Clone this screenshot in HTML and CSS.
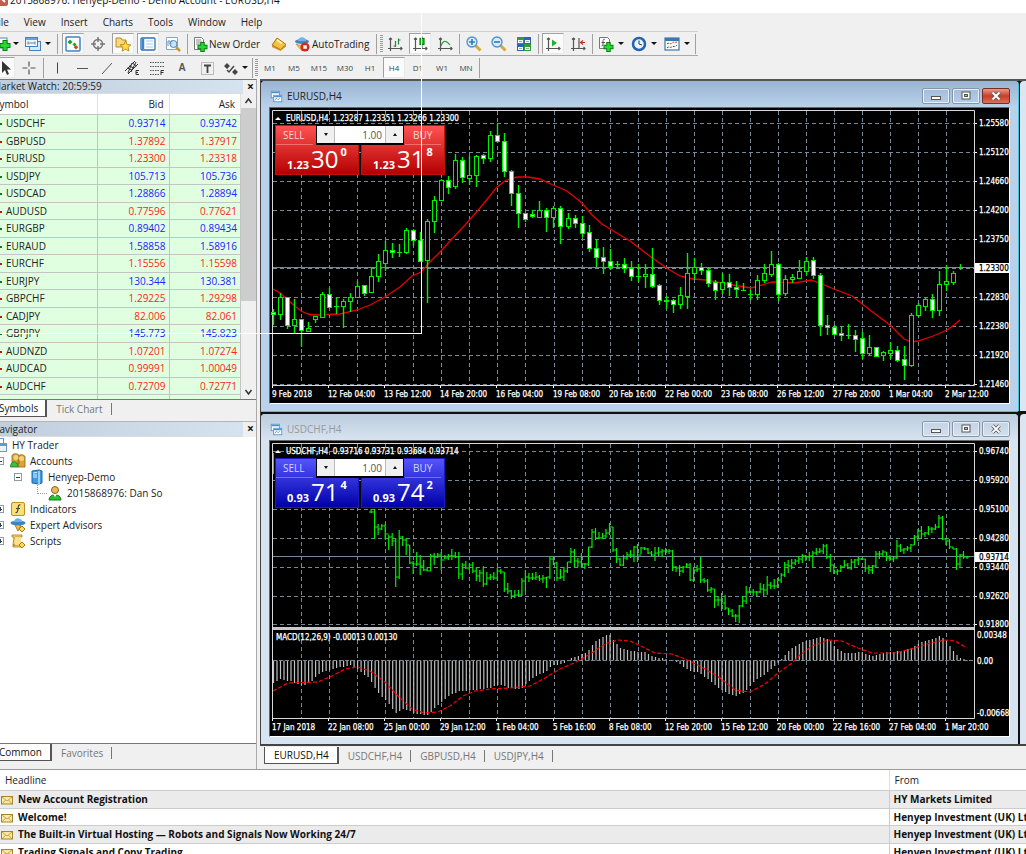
FILE: index.html
```html
<!DOCTYPE html>
<html lang="en">
<head>
<meta charset="utf-8">
<title>Henyep-Demo - Demo Account - EURUSD,H4</title>
<link rel="stylesheet" href="styles.css">
</head>
<body>
<div class="app">
  <header class="titlebar">
    <svg class="ico" viewBox="0 0 16 16"><rect x="1" y="0" width="13" height="14" rx="2" fill="#c75a50"/><path d="M4 3l7 7M4 9l4-4" stroke="#fff" stroke-width="2"/></svg>
    <span>2015868976: Henyep-Demo - Demo Account - EURUSD,H4</span>
  </header>
  <nav class="menubar">
    <button>File</button><button>View</button><button>Insert</button><button>Charts</button><button>Tools</button><button>Window</button><button>Help</button>
  </nav>

  <div class="toolbar">
    <button class="tb drop" aria-label="New chart"><svg class="ico" viewBox="0 0 16 16"><rect x="2" y="2" width="9" height="10" fill="#fff" stroke="#4d88b8"/><path d="M9 4v11M3.500 9.500h11" stroke="#0b7d10" stroke-width="5"/><path d="M9 5v9M4.500 9.500h9" stroke="#28d932" stroke-width="3"/></svg><i class="caret"></i></button>
    <button class="tb drop wide" aria-label="Profiles"><svg class="ico" viewBox="0 0 16 16"><rect x="4.500" y="5.500" width="11" height="9" fill="#d9e8f7" stroke="#4682b8"/><rect x=".5" y="1.500" width="12" height="9" fill="#eef6fd" stroke="#4682b8"/><path d="M1 3h11" stroke="#6ea4d4" stroke-width="2"/><path d="M3 7h7M3 5.500v3M10 5.500v3" stroke="#5b8ab5"/></svg><i class="caret"></i></button>
    <span class="sep roomy"></span>
    <button class="tb on" aria-label="Market Watch"><svg class="ico" viewBox="0 0 16 16"><rect x="1" y="1" width="14" height="14" rx="1" fill="#fff" stroke="#3c85c6" stroke-width="1.500"/><path d="M5 3.500l2.500 2.500L5 8.500 2.500 6z" fill="#1ca32a"/><path d="M9.500 6.500l2 2-2 2-2-2z" fill="#1ca32a"/><path d="M11 9l2.300 2.300L11 13.500 8.700 11.300z" fill="#e03a26"/></svg></button>
    <button class="tb" aria-label="Data Window"><svg class="ico" viewBox="0 0 16 16" fill="none" stroke="#777"><circle cx="8" cy="8" r="4.500" stroke-width="1.500"/><path d="M8 1v5M8 10v5M1 8h5M10 8h5" stroke-width="1.500"/></svg></button>
    <button class="tb on" aria-label="Navigator"><svg class="ico" viewBox="0 0 16 16"><path d="M1 2h5l1 2h4v7H1z" fill="#fbd87a" stroke="#b98a1c"/><path d="M10.500 5l1.700 3.500 3.700.4-2.800 2.500.8 3.700-3.400-1.900-3.400 1.900.8-3.700L5.100 8.900l3.700-.4z" fill="#ffdc45" stroke="#ac7a12" stroke-width=".8"/></svg></button>
    <button class="tb on" aria-label="Terminal"><svg class="ico" viewBox="0 0 16 16"><rect x="1" y="2" width="14" height="12" rx="1" fill="#fff" stroke="#2f74b8" stroke-width="1.300"/><path d="M3 2.500v11" stroke="#3c85c6" stroke-width="2.500"/><path d="M6 5h7M6 8h7M6 11h7" stroke="#a7cbe9"/></svg></button>
    <button class="tb" aria-label="Strategy Tester"><svg class="ico" viewBox="0 0 16 16"><path d="M1.500 1.500h11v12h-11z" fill="#fff" stroke="#8aa6c0"/><path d="M3 10V5h2v3h2V4" fill="none" stroke="#6b8dad"/><path d="M11 11l4 4" stroke="#c9962c" stroke-width="2.500"/><circle cx="8.500" cy="8" r="3.500" fill="#bfdcf4" fill-opacity=".8" stroke="#4d88c0"/></svg></button>
    <span class="sep"></span>
    <button class="tb text order"><svg class="ico" viewBox="0 0 16 16"><path d="M2.500 1.500h7l2 2v10h-9z" fill="#fff" stroke="#777"/><path d="M4 4h5M4 6h6M4 8h5" stroke="#888"/><path d="M10.500 6v10M5.500 11h10" stroke="#0b7d10" stroke-width="4.500"/><path d="M10.500 7v8M6.500 11h8" stroke="#28d932" stroke-width="2.500"/></svg>New Order</button>
    <button class="tb" aria-label="MetaEditor"><svg class="ico" viewBox="0 0 16 16"><path d="M6 2l9 6.500-5.500 5L1 9z" fill="#f3c144" stroke="#a5711a"/><path d="M1 9l8.500 4.500L15 8.500v2L9.500 15 1 11z" fill="#d28d22"/><path d="M6 4l5 3.500" stroke="#fff2b0" stroke-width="2"/></svg></button>
    <button class="tb text auto"><svg class="ico" viewBox="0 0 16 16"><ellipse cx="8" cy="5.500" rx="7" ry="2.500" fill="#3f86c7"/><path d="M4 5c0-5 8-5 8 0z" fill="#74b3e8"/><path d="M2 8l6 7 6-7-6 2z" fill="#f0c24a" stroke="#b78724" stroke-width=".7"/><circle cx="11" cy="11" r="4.500" fill="#d8261c"/><rect x="9.300" y="9.300" width="3.500" height="3.500" fill="#fff"/></svg>AutoTrading</button>
    <span class="sep"></span><span class="grip"></span>
    <button class="tb" aria-label="Bar chart"><svg class="ico" viewBox="0 0 16 16" fill="none" stroke="#555" stroke-width="1.200"><path d="M3.500 2v13M1 12.500h14M2 3.500L3.500 2 5 3.500M13.500 11l1.500 1.500-1.500 1.500"/><path d="M8.500 5v6M6.500 10h2M11.500 2.500v6M11.500 4h2" stroke="#23863a"/></svg></button>
    <button class="tb on" aria-label="Candlesticks"><svg class="ico" viewBox="0 0 16 16" fill="none" stroke="#555" stroke-width="1.200"><path d="M3.500 2v13M1 12.500h14M2 3.500L3.500 2 5 3.500M13.500 11l1.500 1.500-1.500 1.500M10 .5V12"/><rect x="8" y="2.500" width="4" height="6" fill="#1fd02c" stroke="#0b7d10"/></svg></button>
    <button class="tb" aria-label="Line chart"><svg class="ico" viewBox="0 0 16 16" fill="none" stroke="#555" stroke-width="1.200"><path d="M3.500 2v13M1 12.500h14M2 3.500L3.500 2 5 3.500M13.500 11l1.500 1.500-1.500 1.500"/><path d="M4 10c2-6 5-6 9-1" stroke="#23a03a"/></svg></button>
    <span class="sep"></span>
    <button class="tb" aria-label="Zoom in"><svg class="ico" viewBox="0 0 16 16"><path d="M9 9l5.500 5.500" stroke="#d8a93a" stroke-width="3"/><circle cx="6" cy="6" r="5" fill="#d7ecfb" stroke="#4a90cc" stroke-width="1.300"/><path d="M3 6h6M6 3v6" stroke="#3578b5" stroke-width="1.600"/></svg></button>
    <button class="tb" aria-label="Zoom out"><svg class="ico" viewBox="0 0 16 16"><path d="M9 9l5.500 5.500" stroke="#d8a93a" stroke-width="3"/><circle cx="6" cy="6" r="5" fill="#d7ecfb" stroke="#4a90cc" stroke-width="1.300"/><path d="M3 6h6" stroke="#3578b5" stroke-width="1.600"/></svg></button>
    <button class="tb" aria-label="Tile windows"><svg class="ico" viewBox="0 0 16 16"><path d="M1 1h7v7H1zM8 8h7v7H8z" fill="#2f9d3a"/><path d="M8 1h7v7H8zM1 8h7v7H1z" fill="#2d62b8"/><path d="M2 4h5v3H2zM9 4h5v3H9zM2 11h5v3H2zM9 11h5v3H9z" fill="#fff"/><path d="M3 5.500h3M10 5.500h3M3 12.500h3M10 12.500h3" stroke="#8fb98f"/></svg></button>
    <span class="sep"></span>
    <button class="tb on" aria-label="Auto scroll"><svg class="ico" viewBox="0 0 16 16" fill="none" stroke="#555" stroke-width="1.200"><path d="M3.500 2v13M1 12.500h14M2 3.500L3.500 2 5 3.500M13.500 11l1.500 1.500-1.500 1.500"/><path d="M7 3.500l5 3.500-5 3.500z" fill="#1db32a" stroke="none"/></svg></button>
    <button class="tb" aria-label="Chart shift"><svg class="ico" viewBox="0 0 16 16" fill="none" stroke="#555" stroke-width="1.200"><path d="M3.500 2v13M1 12.500h14M2 3.500L3.500 2 5 3.500M13.500 11l1.500 1.500-1.500 1.500M9 2v10"/><path d="M15 6.500h-4M13 4.500l-2.500 2 2.500 2" stroke="#c0341c"/></svg></button>
    <span class="sep"></span>
    <button class="tb drop wide" aria-label="Indicators"><svg class="ico" viewBox="0 0 16 16"><path d="M1.500 1.500h8l2 2v9h-10z" fill="#fff" stroke="#777"/><path d="M7 3.500c-2-1-2 1-2 3s0 4-1.500 3.500M3.500 6.500h3.500" fill="none" stroke="#555"/><path d="M10.500 6v10M5.500 11h10" stroke="#0b7d10" stroke-width="4.500"/><path d="M10.500 7v8M6.500 11h8" stroke="#28d932" stroke-width="2.500"/></svg><i class="caret"></i></button>
    <button class="tb drop wide" aria-label="Periods"><svg class="ico" viewBox="0 0 16 16"><circle cx="8" cy="8" r="6" fill="#eaf4fc" stroke="#2463ad" stroke-width="2.500"/><path d="M8 4.500V8l3 1" fill="none" stroke="#333"/></svg><i class="caret"></i></button>
    <button class="tb drop wide" aria-label="Templates"><svg class="ico" viewBox="0 0 16 16"><rect x="1" y="2" width="14" height="12" fill="#fff" stroke="#3d77b0" stroke-width="1.200"/><path d="M1 3.500h14" stroke="#3d77b0" stroke-width="3"/><path d="M3 8c2-2 3 1 5-1s3 0 5-1" fill="none" stroke="#b2391f" stroke-dasharray="2 1"/><path d="M3 12c2-2 3 0 5-1s3 0 5-2" fill="none" stroke="#444" stroke-dasharray="2 1"/></svg><i class="caret"></i></button>
    <span class="sep"></span>
  </div>

  <div class="toolbar second">
    <button class="tb on cursor" aria-label="Cursor"><svg class="ico" viewBox="0 0 16 16"><path d="M5 1v12l3-3 2 5 2-1-2-4.500h4z" fill="#333"/></svg></button>
    <button class="tb" aria-label="Crosshair"><svg class="ico" viewBox="0 0 16 16"><path d="M8 1.500v5M8 9.500v5M1.500 8h5M9.500 8h5" stroke="#555" stroke-width="1.200"/></svg></button>
    <span class="sep"></span>
    <button class="tb" aria-label="Vertical line"><svg class="ico" viewBox="0 0 16 16"><path d="M8.500 2.500v11" stroke="#444"/></svg></button>
    <button class="tb" aria-label="Horizontal line"><svg class="ico" viewBox="0 0 16 16"><path d="M3 8.500h11" stroke="#555"/></svg></button>
    <button class="tb" aria-label="Trendline"><svg class="ico" viewBox="0 0 16 16"><path d="M3 14L13 3" stroke="#555"/></svg></button>
    <button class="tb" aria-label="Channel"><svg class="ico" viewBox="0 0 16 16" fill="none" stroke="#333"><path d="M1 11L11 1M4 14L14 4M3 8l5 2M5 6l5 2M8 3l5 3M4 13L8 3M7 12l5-10"/><path d="M15 10.500h-3v4h3M12 12.500h2"/></svg></button>
    <button class="tb" aria-label="Fibonacci"><svg class="ico" viewBox="0 0 16 16" fill="none" stroke="#555"><path d="M1 2.500h14M1 6.500h14M1 10.500h10M1 14.500h9" stroke-dasharray="1.500 1"/><path d="M15 10.500h-3v4.500M12 12.500h2.500" stroke="#333"/></svg></button>
    <button class="tb glyph">A</button>
    <button class="tb" aria-label="Text label"><svg class="ico" viewBox="0 0 16 16" fill="none" stroke="#444"><rect x="2.500" y="2.500" width="12" height="12" stroke="#888" stroke-dasharray="1 1"/><path d="M5 5.500h7M8.500 5v8" stroke-width="1.800"/></svg></button>
    <button class="tb drop wide" aria-label="Arrows"><svg class="ico" viewBox="0 0 16 16"><path d="M4 3l3 3-3 3-3-3zM12 9l3 3-3 3-3-3z" fill="#444"/><path d="M4 10l2 2 5-6" fill="none" stroke="#444" stroke-width="1.500"/></svg><i class="caret"></i></button>
    <span class="sep"></span><span class="grip"></span>
    <button class="tb tf">M1</button><button class="tb tf">M5</button><button class="tb tf long">M15</button><button class="tb tf long">M30</button><button class="tb tf">H1</button><button class="tb tf on">H4</button><button class="tb tf">D1</button><button class="tb tf">W1</button><button class="tb tf">MN</button>
    <span class="sep"></span>
  </div>

  <main class="main">
    <aside class="side">
      <section class="panel watch">
        <div class="panel-head"><h2>Market Watch: 20:59:59</h2><button class="x" aria-label="Close">×</button></div>
        <div class="watch-body">
          <div class="watch-scroll">
            <table class="quotes">
              <thead><tr><th>Symbol</th><th>Bid</th><th>Ask</th></tr></thead>
              <tbody>
                <tr class="up"><td>USDCHF</td><td>0.93714</td><td>0.93742</td></tr>
                <tr class="down"><td>GBPUSD</td><td>1.37892</td><td>1.37917</td></tr>
                <tr class="down"><td>EURUSD</td><td>1.23300</td><td>1.23318</td></tr>
                <tr class="up"><td>USDJPY</td><td>105.713</td><td>105.736</td></tr>
                <tr class="up"><td>USDCAD</td><td>1.28866</td><td>1.28894</td></tr>
                <tr class="down"><td>AUDUSD</td><td>0.77596</td><td>0.77621</td></tr>
                <tr class="up"><td>EURGBP</td><td>0.89402</td><td>0.89434</td></tr>
                <tr class="up"><td>EURAUD</td><td>1.58858</td><td>1.58916</td></tr>
                <tr class="down"><td>EURCHF</td><td>1.15556</td><td>1.15598</td></tr>
                <tr class="up"><td>EURJPY</td><td>130.344</td><td>130.381</td></tr>
                <tr class="down"><td>GBPCHF</td><td>1.29225</td><td>1.29298</td></tr>
                <tr class="down"><td>CADJPY</td><td>82.006</td><td>82.061</td></tr>
                <tr class="up"><td>GBPJPY</td><td>145.773</td><td>145.823</td></tr>
                <tr class="down"><td>AUDNZD</td><td>1.07201</td><td>1.07274</td></tr>
                <tr class="down"><td>AUDCAD</td><td>0.99991</td><td>1.00049</td></tr>
                <tr class="down"><td>AUDCHF</td><td>0.72709</td><td>0.72771</td></tr>
                <tr class="blank"><td></td><td></td><td></td></tr>
              </tbody>
            </table>
          </div>
          <div class="scrollbar">
            <svg viewBox="0 0 14 14"><path d="M4 9l3-4 3 4" fill="none" stroke="#333" stroke-width="1.500"/></svg>
            <div class="thumb"></div>
            <svg viewBox="0 0 14 14"><path d="M4 5l3 4 3-4" fill="none" stroke="#333" stroke-width="1.500"/></svg>
          </div>
        </div>
        <div class="tabs"><button class="tab active">Symbols</button><button class="tab">Tick Chart</button></div>
      </section>
      <section class="panel nav">
        <div class="panel-head"><h2>Navigator</h2><button class="x" aria-label="Close">×</button></div>
        <ul class="tree">
          <li class="l0"><svg class="ico" viewBox="0 0 16 16"><rect x="1.500" y="1.500" width="10" height="8" fill="#fff" stroke="#5e9bd2"/><rect x="3.500" y="6.500" width="11" height="8" fill="#eaf3fb" stroke="#5e9bd2"/><path d="M4 8h10" stroke="#5e9bd2" stroke-width="2"/></svg>HY Trader</li>
          <li class="l1"><i class="box minus"></i><svg class="ico" viewBox="0 0 16 16"><path d="M2 3c0-3 7-3 7 0v8H2zM8 4c0-3 7-3 7 0v10H8z" fill="#dba436" stroke="#8f6415" stroke-width=".8"/><circle cx="6" cy="4.500" r="2.500" fill="#f4d27c"/><circle cx="11.500" cy="5.500" r="2.500" fill="#f4d27c"/><path d="M.5 14c0-7 7.500-7 7.500 0z" fill="#3ac040" stroke="#147a1c" stroke-width=".8"/></svg>Accounts</li>
          <li class="l2"><i class="box minus"></i><svg class="ico" viewBox="0 0 16 16"><path d="M4 2l7-1 3 1v12l-3 1-7-1z" fill="#3b9ae6" stroke="#1769b0"/><path d="M5 4l4-.5M5 6h4M5 8h4" stroke="#e4f3ff" stroke-width="1.200"/><path d="M11 2v13" stroke="#bfe0fa" stroke-width="1.500"/></svg>Henyep-Demo</li>
          <li class="l3"><svg class="ico" viewBox="0 0 16 16"><path d="M2 15c0-7 12-7 12 0z" fill="#2fbe36" stroke="#147a1c"/><path d="M6 9l2 3 2-3z" fill="#fff"/><circle cx="8" cy="5" r="3.500" fill="#e9b75c" stroke="#8f6415"/></svg>2015868976: Dan So</li>
          <li class="l1"><i class="box"></i><svg class="ico" viewBox="0 0 16 16"><rect x="1.500" y="1.500" width="13" height="13" rx="1.500" fill="#fbdf79" stroke="#c08d1e"/><path d="M10.500 4C8 3 8.500 6 8 8s-.5 4-2.500 3.500M6 7.500h4" fill="none" stroke="#444" stroke-width="1.200"/></svg>Indicators</li>
          <li class="l1"><i class="box"></i><svg class="ico" viewBox="0 0 16 16"><path d="M4 6l4 8 4-8z" fill="#eec251" stroke="#a9781b"/><ellipse cx="8" cy="6" rx="7.500" ry="2.500" fill="#3c83c6"/><path d="M4 5c0-5 8-5 8 0z" fill="#6cb0e8"/><path d="M12 9l3 3-3 3-3-3z" fill="#ffd95a" stroke="#a9781b"/></svg>Expert Advisors</li>
          <li class="l1"><i class="box"></i><svg class="ico" viewBox="0 0 16 16"><path d="M2 2h10v2H5l1 8H3L4 4H2zM3 12h8v2H3z" fill="#f7d671" stroke="#a9781b" stroke-width=".8"/><path d="M5 4h6v8H5z" fill="#fde08c"/><path d="M12 9l3 3-3 3-3-3z" fill="#ffd95a" stroke="#a9781b"/></svg>Scripts</li>
        </ul>
        <div class="tabs"><button class="tab active">Common</button><button class="tab">Favorites</button></div>
      </section>
    </aside>

    <section class="work">
      <div class="mdi">
        <article class="win active">
          <header class="win-head">
            <svg class="ico" viewBox="0 0 16 16"><rect x="1.500" y="1.500" width="10" height="8" fill="#fff" stroke="#4b8fd0"/><rect x="4.500" y="6.500" width="10" height="8" fill="#fff" stroke="#4b8fd0"/><path d="M5 8h9M2 3h9" stroke="#4b8fd0" stroke-width="2"/><path d="M6 13l2-3 2 2 2-2" fill="none" stroke="#4b8fd0"/></svg>
            <h2>EURUSD,H4</h2>
            <button class="wb" aria-label="Minimize"><svg viewBox="0 0 12 10"><rect x="1.500" y="5.500" width="9" height="3" fill="#fff" stroke="#555"/></svg></button>
            <button class="wb" aria-label="Maximize"><svg viewBox="0 0 12 10"><rect x="2" y="1" width="8" height="7" fill="#fff" stroke="#555"/><rect x="4.500" y="3.500" width="3" height="2" fill="#9bb8da" stroke="#555"/></svg></button>
            <button class="wb close" aria-label="Close"><svg viewBox="0 0 12 10"><path d="M2.500 1.500l7 7M9.500 1.500l-7 7" stroke="#555" stroke-width="3.500"/><path d="M2.500 1.500l7 7M9.500 1.500l-7 7" stroke="#fff" stroke-width="2"/></svg></button>
          </header>
          <div class="client" id="eurusd">
            <div class="trade red">
              <button class="side-btn"><span class="lab">SELL</span><span class="px"><b>1.23</b><em>30</em><sup>0</sup></span></button>
              <button class="side-btn buy"><span class="lab">BUY</span><span class="px"><b>1.23</b><em>31</em><sup>8</sup></span></button>
              <div class="vol"><button aria-label="Less"><i class="caret"></i></button><input aria-label="Volume" value="1.00"><button aria-label="More"><i class="caret flip"></i></button></div>
            </div>
          </div>
        </article>
        <div class="win sliver active"></div>
        <article class="win">
          <header class="win-head">
            <svg class="ico" viewBox="0 0 16 16"><rect x="1.500" y="1.500" width="10" height="8" fill="#fff" stroke="#4b8fd0"/><rect x="4.500" y="6.500" width="10" height="8" fill="#fff" stroke="#4b8fd0"/><path d="M5 8h9M2 3h9" stroke="#4b8fd0" stroke-width="2"/><path d="M6 13l2-3 2 2 2-2" fill="none" stroke="#4b8fd0"/></svg>
            <h2>USDCHF,H4</h2>
            <button class="wb" aria-label="Minimize"><svg viewBox="0 0 12 10"><rect x="1.500" y="5.500" width="9" height="3" fill="#fff" stroke="#555"/></svg></button>
            <button class="wb" aria-label="Maximize"><svg viewBox="0 0 12 10"><rect x="2" y="1" width="8" height="7" fill="#fff" stroke="#555"/><rect x="4.500" y="3.500" width="3" height="2" fill="#9bb8da" stroke="#555"/></svg></button>
            <button class="wb" aria-label="Close"><svg viewBox="0 0 12 10"><path d="M2.500 1.500l7 7M9.500 1.500l-7 7" stroke="#555" stroke-width="3.500"/><path d="M2.500 1.500l7 7M9.500 1.500l-7 7" stroke="#fff" stroke-width="1.800"/></svg></button>
          </header>
          <div class="client" id="usdchf">
            <div class="trade blue">
              <button class="side-btn"><span class="lab">SELL</span><span class="px"><b>0.93</b><em>71</em><sup>4</sup></span></button>
              <button class="side-btn buy"><span class="lab">BUY</span><span class="px"><b>0.93</b><em>74</em><sup>2</sup></span></button>
              <div class="vol"><button aria-label="Less"><i class="caret"></i></button><input aria-label="Volume" value="1.00"><button aria-label="More"><i class="caret flip"></i></button></div>
            </div>
          </div>
        </article>
        <div class="win sliver"></div>
      </div>
      <div class="tabs charts-tabs"><button class="tab active">EURUSD,H4</button><button class="tab">USDCHF,H4</button><button class="tab">GBPUSD,H4</button><button class="tab">USDJPY,H4</button></div>
    </section>
  </main>

  <section class="terminal">
    <table class="mail">
      <thead><tr><th>Headline</th><th class="from">From</th></tr></thead>
      <tbody>
        <tr><td><svg class="env" viewBox="0 0 12 10"><rect x=".5" y="1.500" width="11" height="7.500" fill="#fbe9a6" stroke="#a5832c"/><path d="M1 2l5 4 5-4M1 9l3.500-4M11 9L7.500 5" fill="none" stroke="#b8943c" stroke-width=".8"/></svg>New Account Registration</td><td>HY Markets Limited</td></tr>
        <tr><td><svg class="env" viewBox="0 0 12 10"><rect x=".5" y="1.500" width="11" height="7.500" fill="#fbe9a6" stroke="#a5832c"/><path d="M1 2l5 4 5-4M1 9l3.500-4M11 9L7.500 5" fill="none" stroke="#b8943c" stroke-width=".8"/></svg>Welcome!</td><td>Henyep Investment (UK) Ltd</td></tr>
        <tr><td><svg class="env" viewBox="0 0 12 10"><rect x=".5" y="1.500" width="11" height="7.500" fill="#fbe9a6" stroke="#a5832c"/><path d="M1 2l5 4 5-4M1 9l3.500-4M11 9L7.500 5" fill="none" stroke="#b8943c" stroke-width=".8"/></svg>The Built-in Virtual Hosting — Robots and Signals Now Working 24/7</td><td>Henyep Investment (UK) Ltd</td></tr>
        <tr><td><svg class="env" viewBox="0 0 12 10"><rect x=".5" y="1.500" width="11" height="7.500" fill="#fbe9a6" stroke="#a5832c"/><path d="M1 2l5 4 5-4M1 9l3.500-4M11 9L7.500 5" fill="none" stroke="#b8943c" stroke-width=".8"/></svg>Trading Signals and Copy Trading</td><td>Henyep Investment (UK) Ltd</td></tr>
      </tbody>
    </table>
  </section>
</div>
<div class="marquee"></div>
<script src="charts.js"></script>
</body>
</html>
```
FILE: styles.css
```css
* { box-sizing: border-box; }
body { margin: 0; height: 100vh; overflow: hidden; background: #f0f0f0; color: #222; font: 10px/14px "Open Sans", "Noto Sans", sans-serif; }
button, input { font: inherit; color: inherit; border: 0; padding: 0; background: none; margin: 0; }
h2 { font: inherit; margin: 0; }
.ico { width: 16px; height: 16px; flex: none; display: block; }

/* the shell hangs 8px past the left screen edge */
.app { height: 100vh; margin-left: -8px; display: flex; flex-direction: column; }

.titlebar { height: 13px; flex: none; background: #fff; padding: 0 0 5px 2px; display: flex; align-items: flex-end; overflow: hidden; color: #111; line-height: 16px; }
.menubar { height: 18px; flex: none; padding: 0 0 1px 1px; display: flex; align-items: center; gap: 1px; }
.menubar button { padding: 0 7px; }
.menubar button:first-child { padding-left: 0; }

.toolbar { height: 25px; flex: none; padding-left: 3px; display: flex; align-items: center; gap: 3px; border-top: 1px solid #cfcfcf; border-bottom: 1px solid #a8a8a8; width: 706px; }
.toolbar.second { height: 23px; border: 0; width: auto; }
.tb { width: 22px; height: 21px; display: flex; align-items: center; justify-content: center; border: 1px solid transparent; flex: none; white-space: nowrap; }
.tb.on { background: #fafafa; border-color: #a0a0a0 #e8e8e8 #e8e8e8 #a0a0a0; }
.tb.drop { width: 25px; gap: 1px; }
.tb.drop.wide { width: 30px; gap: 4px; }
.second .tb.drop.wide { width: 28px; gap: 3px; }
.tb.text { justify-content: flex-start; gap: 1px; }
.tb.order { width: 74px; }
.tb.auto { width: 80px; gap: 2px; }
.tb.cursor { width: 20px; }
.tb.glyph { font: bold 10px/14px "Liberation Sans", sans-serif; color: #555; }
.tb.tf { font-size: 8px; color: #444; margin-right: -1px; }
.tb.tf.long { width: 24px; }
.sep { width: 1px; height: 20px; background: #a0a0a0; flex: none; }
.sep.roomy { margin: 0 1px; }
.second .sep { margin-right: -1px; }
.grip { width: 3px; height: 18px; margin-right: -2px; flex: none; background: repeating-linear-gradient(#9a9a9a 0 1px, #f0f0f0 1px 2px); }
.caret { width: 0; height: 0; border: 3px solid transparent; border-top-color: #111; border-bottom: 0; flex: none; }
.caret.flip { border-top: 0; border-bottom: 3px solid #111; }

.main { flex: 1; min-height: 0; display: grid; grid-template-columns: 265px minmax(0, 1fr); gap: 3px; }
.side { display: flex; flex-direction: column; min-height: 0; border-top: 1px solid #777; border-right: 1px solid #aaa; }
.panel { display: flex; flex-direction: column; }
.watch { height: 342px; flex: none; border-bottom: 1px solid #b5b5b5; }
.nav { flex: 1; min-height: 0; }
.panel-head { height: 14px; flex: none; margin-right: 13px; background: linear-gradient(90deg, #bfcddc, #d5e3f1); display: flex; align-items: center; border-bottom: 1px solid #ddd; }
.nav .panel-head { height: 15px; }
.panel-head h2 { flex: 1; line-height: 13px; }
.x { width: 15px; margin-right: -15px; line-height: 12px; font-size: 12px; font-weight: bold; color: #111; }
.watch-body { display: flex; height: 306px; overflow: hidden; border-bottom: 1px solid #777; }
.watch-scroll { flex: 1; }
.quotes { width: 100%; border-collapse: collapse; table-layout: fixed; }
.quotes th { height: 20px; font-weight: normal; background: #fff; padding: 0 5px 0 0; text-align: right; border-right: 1px solid #e0e0e0; border-bottom: 1px solid #c5c5c5; }
.quotes th:first-child { width: 105px; text-align: left; padding-left: 2px; }
.quotes th:nth-child(2) { width: 72px; }
.quotes td { height: 18px; padding: 0 3px 0 0; text-align: right; background: #e0ffe0; border-right: 1px solid #c4c4c4; border-bottom: 1px solid #c4c4c4; line-height: 14px; }
.quotes tr:nth-child(even) td { height: 17px; }
.quotes td:first-child { text-align: left; padding-left: 14px; background: linear-gradient(var(--tick), var(--tick)) 7px 8px / 3px 2px no-repeat #e0ffe0; }
.up { --tick: #0a7a1a; }
.down { --tick: #b01a10; }
.blank { --tick: transparent; }
.up td:not(:first-child) { color: #2222ff; }
.down td:not(:first-child) { color: #ff2414; }
.scrollbar { width: 15px; background: #f0f0f0; display: flex; flex-direction: column; }
.scrollbar svg { height: 14px; flex: none; }
.thumb { height: 193px; background: #cdcdcd; margin-bottom: auto; }

.tabs { display: flex; height: 17px; flex: none; color: #777; }
.tab { padding: 0 9px; height: 17px; position: relative; }
.tab + .tab::after { content: ""; position: absolute; right: 0; top: 3px; height: 12px; border-right: 1px solid #777; }
.tab.active { background: #fff; color: #111; border-right: 2px solid #555; border-bottom: 1px solid #555; padding: 0 7px; }
.tree { list-style: none; margin: 0; padding: 0; flex: 1; background: #fff; border-bottom: 1px solid #777; }
.tree li { height: 16px; display: flex; align-items: center; gap: 4px; white-space: nowrap; line-height: 16px; position: relative; }
.tree .l1 { padding-left: 4px; }
.tree .l2 { padding-left: 22px; }
.tree .l3 { padding-left: 55px; }
.tree .l3::before { content: ""; position: absolute; left: 45px; top: 0; width: 9px; height: 8px; border: dotted #999; border-width: 0 0 1px 1px; }
.box { width: 8px; height: 8px; border: 1px solid #8a9bb0; flex: none; margin-right: 2px; background: linear-gradient(#345, #345) 1px 50% / 4px 1px no-repeat, linear-gradient(#345, #345) 50% 1px / 1px 4px no-repeat #fff; }
.box.minus { background: linear-gradient(#345, #345) 1px 50% / 4px 1px no-repeat #fff; }
.nav .tabs { height: 25px; }
.nav .tab.active { padding-right: 8px; }

.work { display: flex; flex-direction: column; min-width: 0; }
.mdi { flex: 1; min-height: 0; background: #111; border-top: 2px solid #555; border-left: 1px solid #444; border-bottom: 2px solid #444; display: grid; grid-template-columns: minmax(0, 1fr) 6px; grid-template-rows: 1fr 1fr; gap: 3px 2px; overflow: hidden; }
.win { display: flex; flex-direction: column; min-height: 0; padding: 0 8px 7px; background: #d6e3f1; border-radius: 4px 4px 0 0; }
.win.active { background: #b9d1ea; box-shadow: 0 1px 0 #3fc6dd, 1px 0 0 #3fc6dd; }
.win.sliver { padding: 0; border-radius: 4px 0 0 0; background: #dbe6f2; box-shadow: none; }
.win-head { height: 26px; flex: none; margin: 0 -8px; padding: 4px 8px 0; display: flex; align-items: center; gap: 2px; border-radius: 4px 4px 0 0; background: linear-gradient(#bccddd, #d6e3f1); color: #999; }
.active .win-head { background: linear-gradient(#9ab5d3, #b9d1ea); color: #222; }
.win-head .ico { width: 13px; height: 13px; margin: 0 2px 0 1px; }
.win-head h2 { flex: 1; }
.wb { width: 28px; height: 16px; border: 1px solid #8796ab; border-radius: 2px; display: flex; align-items: center; justify-content: center; box-shadow: inset 0 0 0 1px #e5eef7; }
.wb svg { width: 12px; height: 10px; }
.wb.close { background: linear-gradient(#e59a8e, #c93d26 50%, #d8705c); border-color: #7e2a22; box-shadow: none; }
.client { flex: 1; min-height: 0; position: relative; background: #000; border: 1px solid #666; border-color: #666 #fff #fff #666; overflow: hidden; }
.chart { display: block; width: 100%; height: 100%; font: 8px "DejaVu Sans Condensed", "DejaVu Sans", sans-serif; font-stretch: condensed; }
.chart text { stroke-width: .25px; }
.charts-tabs { height: 23px; padding: 1px 0 0 4px; }
.charts-tabs .tab { height: 17px; }
.charts-tabs .tab.active { padding: 0 8px 0 9px; border-left: 1px solid #555; }

/* one-click trading box sits over the chart */
.trade { position: absolute; left: 5px; top: 17px; width: 170px; height: 50px; display: grid; grid-template-columns: 1fr 1fr; gap: 2px; color: #fff; }
.side-btn { display: flex; flex-direction: column; text-align: left; border: 1px solid var(--edge); background: linear-gradient(var(--hi), var(--lo)); padding: 0 3px 0 11px; }
.red { --hi: #ff5252; --lo: #b40000; --edge: #c01010; --tint: #ffd5d5; }
.blue { --hi: #5555ff; --lo: #0000a8; --edge: #1a1ac0; --tint: #d5d5ff; }
.lab { height: 19px; line-height: 18px; padding-left: 7px; margin-left: -11px; width: 37px; color: var(--tint); border-bottom: 1px solid rgba(255, 255, 255, .3); }
.buy .lab { align-self: flex-end; padding-left: 8px; width: 36px; }
.px { display: flex; height: 28px; width: 100%; align-items: flex-end; gap: 2px; }
.px b { font-size: 11px; line-height: 16px; }
.px em { font-style: normal; font-size: 24px; line-height: 28px; }
.px sup { font-size: 11px; font-weight: bold; line-height: 14px; align-self: flex-start; }
.vol { position: absolute; left: 41px; top: 0; width: 88px; height: 20px; background: #f0f0f0; border: 1px solid #000; border-width: 1px 1px 2px; display: flex; }
.vol button { width: 17px; display: flex; align-items: center; justify-content: center; }
.vol .caret { border-width: 3px 2px 0; }
.vol .caret.flip { border-width: 0 2px 3px; }
.vol input { flex: 1; min-width: 0; background: #fff; color: #555; text-align: right; padding-right: 3px; border: 1px solid #bbb; border-width: 0 1px; }

.terminal { height: 85px; flex: none; overflow: hidden; background: #fff; border-top: 1px solid #999; }
.mail { width: 100%; border-collapse: collapse; table-layout: fixed; }
.mail th { height: 20px; text-align: left; font-weight: normal; padding-left: 13px; border-bottom: 1px solid #ccc; }
.mail th.from { width: 137px; padding-left: 5px; border-left: 1px solid #ddd; }
.mail td { height: 18px; padding: 0 0 0 9px; font-weight: bold; color: #111; white-space: nowrap; overflow: hidden; border-bottom: 1px solid #ccc; line-height: 14px; }
.mail tr:nth-child(even) td { height: 17px; }
.mail td + td { padding-left: 4px; border-left: 1px solid #ccc; }
.mail tbody tr:nth-child(odd) td { background: #ebebeb; }
.env { width: 12px; height: 10px; margin-right: 5px; vertical-align: -2px; }

/* selection rectangle over the desktop */
.marquee { position: absolute; left: 0; top: 0; width: 422px; height: 334px; border: solid #fff; border-width: 0 1px 1px 0; pointer-events: none; }
```
FILE: charts.js
```javascript
// Series are stored in desktop pixels; each chart group is shifted by its origin.
const NS = 'http://www.w3.org/2000/svg';
const GRID = '#778899', LIME = '#00f000';

// body top, body bottom, high, low, kind (u hollow, d filled)
const candles = `312,314,309,325,d 297,314,293,320,u 297,325,297,329,d 319,325,299,333,u 319,330,319,347,d 328,331,322,332,u
316,319,316,323,u 294,317,292,318,u 294,307,288,307,d 306,306,297,314,u 301,306,299,328,u 297,301,293,312,u 286,297,281,298,u
285,293,285,296,d 276,292,267,293,u 261,276,254,282,u 250,263,241,271,u 250,252,243,258,d 252,252,244,257,u 230,252,228,254,u
230,240,229,246,d 240,261,232,261,d 221,260,219,303,u 200,221,196,233,u 180,200,179,201,u 180,187,176,194,d 160,186,154,189,u
160,177,157,183,d 175,178,156,185,u 156,175,155,187,u 155,158,154,164,d 135,158,131,162,u 135,141,124,143,d 141,171,133,177,d
171,193,170,206,d 193,213,185,228,d 213,219,213,222,d 214,216,210,218,d 210,217,201,218,u 210,217,208,232,d 208,217,206,228,u
208,226,206,244,d 218,226,213,229,u 218,223,215,228,d 223,233,216,237,d 232,248,225,252,d 248,257,240,267,d 257,261,247,274,d
261,266,249,270,d 264,264,261,269,u 264,268,258,273,d 268,276,261,281,d 276,276,264,282,u 274,276,264,288,u 274,286,248,288,d
285,300,284,305,d 300,301,296,309,d 300,304,299,313,d 295,304,287,309,u 273,296,253,309,u 267,273,258,280,u 267,270,263,275,d
270,283,267,287,d 282,290,280,300,d 282,289,273,294,u 282,287,274,296,d 287,289,281,297,d 290,290,283,291,u 294,294,290,300,u
280,294,275,300,u 273,280,264,283,u 264,274,251,277,u 264,294,263,301,d 279,293,275,296,u 277,279,274,283,u 271,278,260,278,u
261,271,257,275,u 260,275,257,279,d 275,325,273,336,d 325,327,315,335,d 327,334,325,334,d 333,335,326,341,d 335,335,324,339,u
335,339,330,352,d 338,353,332,359,d 347,353,335,355,u 347,356,347,357,d 352,355,351,361,u 350,353,342,359,u 350,360,346,362,d
359,365,346,380,d 315,365,313,367,u 305,315,303,317,u 299,306,298,311,u 299,310,294,318,d 284,310,271,316,u 281,284,265,291,u
273,282,271,285,u 267,267,264,270,u`.split(/\s+/).map(s => s.split(','));

const average = '273,289 280,293 290,302 301,311 308,314 315,315 340,314 357,310 370,305 385,297 400,287 412,276 421,272 430,262 440,252 450,241 465,225 480,208 497,187 505,181 512,178 518,177 528,177 540,179 553,185 567,191 582,203 592,215 602,224 615,232 630,241 651,257 668,269 680,276 693,279 706,280 727,284 751,288 762,285 772,282 795,283 811,280 822,284 834,289 852,296 870,310 890,325 904,339 912,342 918,341 933,336 947,330 954,325 960,320';

// high, low, close; first visible bar is number 28
const bars = `509,513,512 509,539,527 524,535,529 524,530,526 524,540,534 535,550,537 533,546,541 538,587,577 530,579,537 536,546,540
538,555,545 545,564,563 561,574,564 552,566,564 555,575,566 560,571,570 567,571,571 554,571,556 553,565,557 553,558,555
552,570,560 555,559,558 554,560,556 549,560,556 552,558,557 552,579,574 563,580,565 561,569,568 563,570,565 562,573,571
567,581,576 570,582,573 566,587,584 572,585,578 574,580,577 572,580,578 568,581,571 569,574,572 572,592,589 583,594,591
590,599,596 590,598,595 590,596,595 578,596,581 570,591,577 573,582,578 573,580,578 572,580,577 575,581,579 575,583,578
577,588,577 556,579,559 556,565,563 562,581,578 569,579,577 567,581,571 562,573,562 548,563,552 549,567,561 558,567,562
553,567,564 563,569,564 547,566,547 529,548,532 528,540,538 532,539,538 533,539,536 529,538,533 523,535,527 527,552,550
548,563,559 558,566,565 555,566,558 552,560,555 550,558,555 546,562,547 544,562,555 547,554,548 547,550,549 548,554,553
551,556,555 547,561,553 547,556,552 549,557,551 548,555,551 549,554,551 550,571,567 566,572,568 565,576,571 566,573,567
563,568,565 563,581,580 567,582,570 565,572,569 557,583,580 578,583,581 579,592,590 587,593,589 589,608,600 596,606,600
593,611,603 595,610,608 608,615,611 609,617,616 614,622,616 605,623,606 596,607,601 586,604,592 587,593,592 589,596,592
591,596,592 583,593,589 584,596,590 576,595,585 582,589,586 579,589,586 578,588,580 573,583,575 562,577,565 560,573,566
559,569,563 559,565,561 556,564,559 554,563,556 555,561,557 552,561,556 551,567,553 548,555,552 548,553,551 544,554,546
544,559,557 554,572,565 565,574,572 569,575,571 565,572,567 560,568,565 563,569,568 559,570,562 559,567,560 557,565,559
558,560,559 559,572,568 565,574,570 565,574,566 551,567,554 551,559,554 550,557,552 552,561,558 555,561,559 556,562,558
540,559,546 544,552,550 548,554,549 546,551,548 544,552,545 535,545,537 529,541,531 526,539,534 532,537,533 526,535,529
527,533,529 524,530,527 515,528,518 516,540,539 538,545,541 539,549,547 547,549,549 548,570,564 554,567,555 551,559,557
556,559,557`.split(/\s+/).map(s => s.split(',').map(Number));

const macd = pts('273,683 280,679 290,681 297,684 304,686 311,682 320,673 330,670 350,665 357,669 368,677 378,692 388,703 396,713 402,709 410,711 415,714 428,715 436,707 448,696 460,691 475,690 490,688 500,684 508,688 518,689 522,688 530,680 540,674 548,671 551,666 566,663 569,660 572,658 580,655 588,652 594,642 604,636 609,633 612,638 620,648 630,651 645,652 655,657 672,660 680,664 688,670 700,673 710,681 718,688 727,693 735,696 745,692 753,682 765,674 777,664 783,658 790,650 800,643 812,639 822,637 830,640 836,648 845,653 855,653 862,652 872,656 882,653 900,651 912,648 920,643 932,639 940,636 946,640 950,646 956,654 962,659 972,660');
const signal = '273,691 288,683 318,682 332,676 345,669 357,667 370,671 385,682 400,698 412,709 424,713 438,712 450,706 463,696 475,691 490,689 510,688 530,686 545,678 560,669 576,662 590,654 605,644 618,640 630,641 645,648 655,653 672,654 690,661 705,669 720,678 735,690 750,692 765,684 778,673 792,663 800,655 812,646 828,640 842,641 858,648 872,653 895,653 915,648 930,643 945,640 955,641 967,648';

const times1 = ['9 Feb 2018', '12 Feb 04:00', '13 Feb 12:00', '14 Feb 20:00', '16 Feb 04:00', '19 Feb 08:00', '20 Feb 16:00', '22 Feb 00:00', '23 Feb 08:00', '26 Feb 12:00', '27 Feb 20:00', '1 Mar 04:00', '2 Mar 12:00'];
const times2 = ['17 Jan 2018', '22 Jan 08:00', '25 Jan 00:00', '29 Jan 12:00', '1 Feb 04:00', '5 Feb 16:00', '8 Feb 08:00', '12 Feb 20:00', '15 Feb 12:00', '20 Feb 00:00', '22 Feb 16:00', '27 Feb 04:00', '1 Mar 20:00'];

function pts(s) { return s.split(' ').map(p => p.split(',').map(Number)); }
function at(curve, x) {
  for (let i = 1; i < curve.length; i++) {
    const [a, b] = [curve[i - 1], curve[i]];
    if (x <= b[0]) return a[1] + (b[1] - a[1]) * (x - a[0]) / (b[0] - a[0]);
  }
  return curve[curve.length - 1][1];
}
function add(g, tag, attrs, text) {
  const e = document.createElementNS(NS, tag);
  for (const k in attrs) e.setAttribute(k, attrs[k]);
  if (text) e.textContent = text;
  g.appendChild(e);
  return e;
}
const path = (g, d, stroke, extra) => add(g, 'path', { d, stroke, fill: 'none', ...extra });
const label = (g, x, y, s, fill = '#fff') => add(g, 'text', { x, y, fill, stroke: fill }, s);

function stage(id, oy) {
  const box = document.getElementById(id);
  box.querySelector('.chart')?.remove();
  const svg = document.createElementNS(NS, 'svg');
  svg.setAttribute('class', 'chart');
  box.prepend(svg);
  const right = 270 + box.clientWidth - 35;
  return { g: add(svg, 'g', { transform: `translate(-270,${-oy})` }), right };
}

function frame(g, right, top, bottom, levels, times, textY) {
  let d = '';
  for (let k = 1; 273 + k * 28.05 < right; k++) { const x = Math.round(273 + k * 28.05) + .5; d += `M${x} ${top}V${bottom}`; }
  for (const [y] of levels) d += `M273 ${y + .5}H${right}`;
  path(g, d, GRID, { 'stroke-dasharray': '4 3' });
  levels.forEach(([y, s]) => { path(g, `M${right} ${y + .5}h3`, '#fff'); label(g, right + 5, y + 3, s); });
  times.forEach((s, i) => {
    const x = Math.round(272 + i * 56.1);
    path(g, `M${x + .5} ${bottom}v3`, '#fff');
    label(g, x, textY, s);
  });
}
function border(g, x1, y1, x2, y2) { path(g, `M${x1 + .5} ${y1 + .5}H${x2 + .5}V${y2 + .5}H${x1 + .5}Z`, '#d8d8d8'); }
function heading(g, y, s) {
  path(g, `M275 ${y}l3-3 3 3z`, 'none', { fill: '#fff' });
  label(g, 286, y + 1, s);
}
function priceTag(g, right, y, s) {
  path(g, `M273 ${y + .5}H${right}`, GRID);
  add(g, 'rect', { x: right + 1, y: y - 4, width: 34, height: 10, fill: '#fff' });
  label(g, right + 5, y + 4, s, '#000');
}

function drawEur() {
  const { g, right } = stage('eurusd', 108);
  const names = ['1.25580', '1.25120', '1.24660', '1.24200', '1.23750', '', '1.22830', '1.22380', '1.21920', '1.21460'];
  frame(g, right, 111, 385, names.map((s, i) => [Math.round(123 + i * 28.95), s]), times1, 397);
  border(g, 272, 110, right, 385);
  priceTag(g, right, 267, '1.23300');
  path(g, 'M' + average.replaceAll(' ', 'L'), '#e80000', { 'stroke-width': 1.3 });
  candles.forEach(([a, b, h, l, kind], i) => {
    const x = Math.round(273 + i * 7.012);
    path(g, `M${x + .5} ${h}V${l}`, LIME, { 'stroke-width': 1.4 });
    if (a === b) path(g, `M${x - 2} ${+a + .5}h5`, LIME);
    else add(g, 'rect', { x: x - 1.5, y: +a + .5, width: 4, height: b - a, fill: kind === 'd' ? '#fff' : '#000', stroke: LIME });
  });
  heading(g, 120, 'EURUSD,H4\u00a0\u00a01.23287 1.23351 1.23266 1.23300');
}

function drawChf() {
  const { g, right } = stage('usdchf', 441);
  const names = ['0.96740', '0.95920', '0.95100', '0.94280', '0.93440', '0.92620', '0.91800'];
  frame(g, right, 444, 718, names.map((s, i) => [Math.round(451 + i * 28.9), s]), times2, 730);
  priceTag(g, right, 556, '0.93714');
  path(g, 'M273.500 453V474', LIME);
  let prev = 512, d = '';
  bars.forEach(([h, l, c], i) => {
    const x = (273 + (i + 28) * 3.505).toFixed(1);
    d += `M${x} ${h}V${l}M${x - 2} ${prev}H${x}M${x} ${c}h2`;
    prev = c;
  });
  path(g, d, LIME, { 'stroke-width': 1.2 });
  add(g, 'rect', { x: 272, y: 627, width: right - 271, height: 3, fill: '#c8c8c8' });
  let m = '';
  for (let i = 0; i < 199; i++) {
    const x = 273.5 + i * 3.505;
    m += `M${x.toFixed(1)} 660.500V${at(macd, x).toFixed(0)}`;
  }
  path(g, m, '#c0c0c0', { 'stroke-width': 1.2 });
  path(g, `M273 660.500H${right}`, GRID, { 'stroke-dasharray': '4 2' });
  path(g, 'M' + signal.replaceAll(' ', 'L'), '#ff0000', { 'stroke-dasharray': '4 2', 'stroke-width': 1.2 });
  border(g, 272, 443, right, 718);
  label(g, 276, 640, 'MACD(12,26,9) -0.00013 0.00130');
  label(g, right + 3, 638, '0.00348');
  label(g, right + 3, 664, '0.00');
  label(g, right + 3, 716, '-0.00668');
  heading(g, 453, 'USDCHF,H4\u00a0\u00a00.93716 0.93731 0.93684 0.93714');
}

function draw() { drawEur(); drawChf(); }
draw();
addEventListener('resize', draw);
```
